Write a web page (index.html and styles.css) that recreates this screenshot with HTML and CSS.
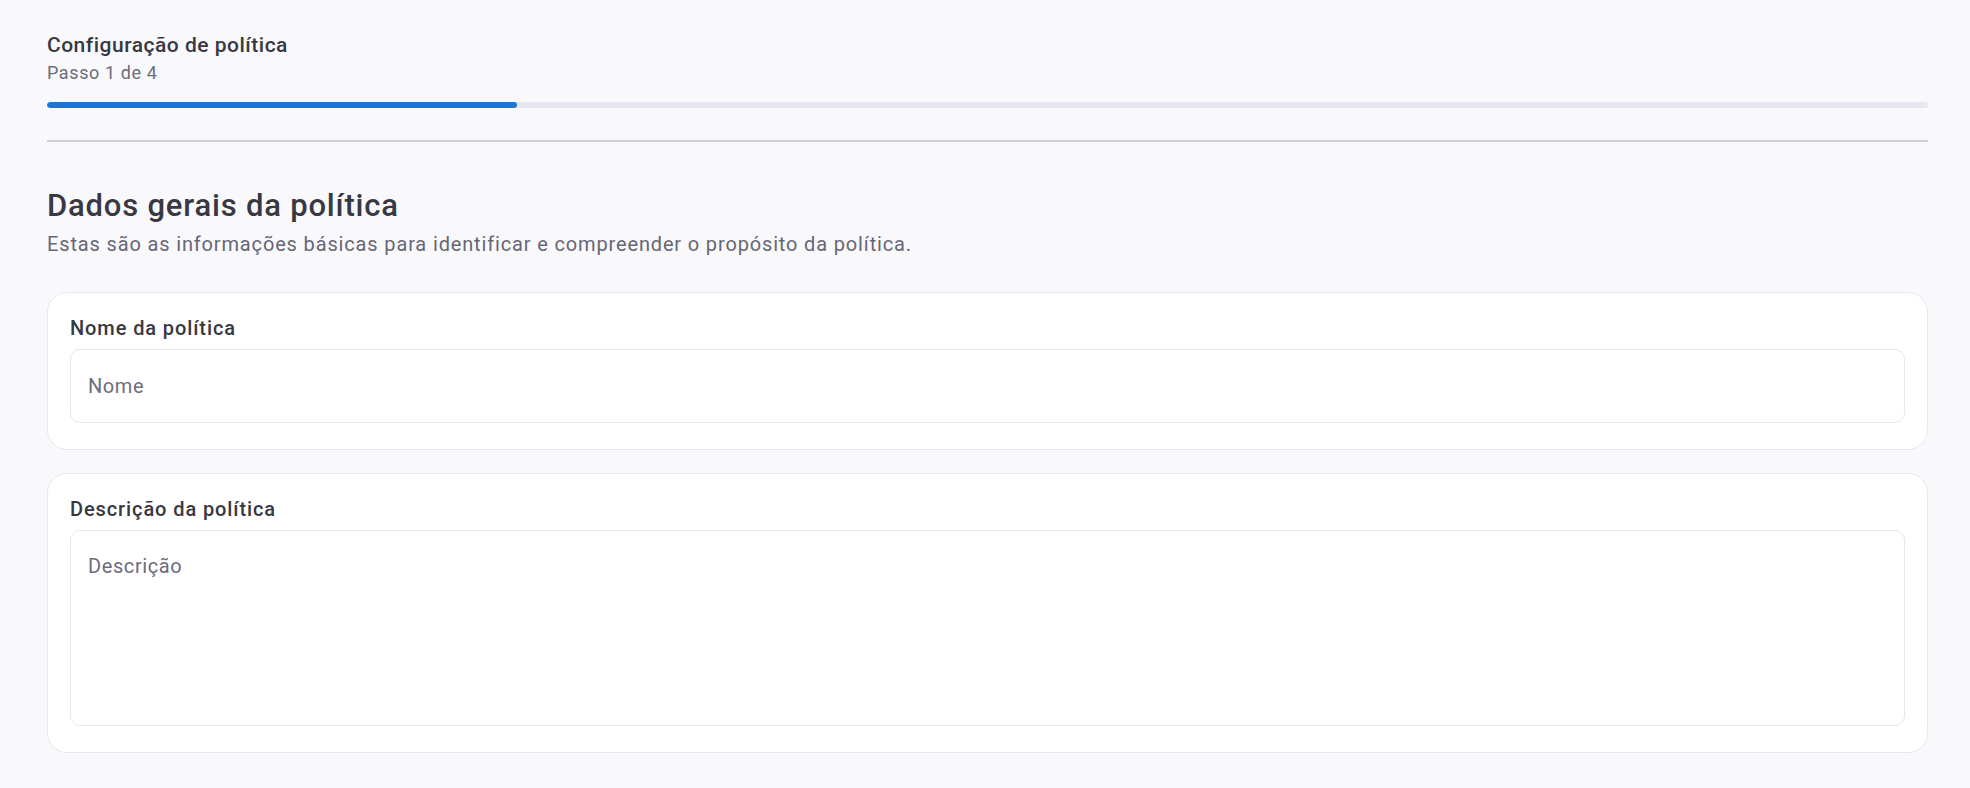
FILE: index.html
```html
<!DOCTYPE html>
<html lang="pt-BR">
<head>
    <meta charset="UTF-8">
    <meta name="viewport" content="width=device-width, initial-scale=1.0">
    <title>Configuração de política</title>
    <link rel="stylesheet" href="styles.css">
</head>
<body>
    <header class="stepper">
        <h1>Configuração de política</h1>
        <p class="step-count">Passo 1 de 4</p>
        <div class="progress">
            <div class="progress-fill" style="width: 25%"></div>
        </div>
    </header>

    <hr class="divider">

    <section class="section-head">
        <h2>Dados gerais da política</h2>
        <p>Estas são as informações básicas para identificar e compreender o propósito da política.</p>
    </section>

    <div class="field-card">
        <label for="policy-name">Nome da política</label>
        <input type="text" id="policy-name" placeholder="Nome">
    </div>

    <div class="field-card">
        <label for="policy-desc">Descrição da política</label>
        <textarea id="policy-desc" placeholder="Descrição"></textarea>
    </div>
</body>
</html>
```

FILE: styles.css
```css
* {
    margin: 0;
    padding: 0;
    box-sizing: border-box;
}

body {
    font-family: Roboto, "Liberation Sans", Arial, sans-serif;
    background-color: #f9f9fb;
    color: #383842;
    padding: 33px 42px 0 47px;
}

.stepper h1 {
    font-size: 21px;
    font-weight: 500;
    line-height: 25px;
    letter-spacing: 0.5px;
}

.step-count {
    margin-top: 3px;
    font-size: 18px;
    line-height: 24px;
    letter-spacing: 0.6px;
    color: #6c6c7e;
}

.progress {
    margin-top: 17px;
    height: 6px;
    border-radius: 3px;
    background-color: #e7e7f1;
    overflow: hidden;
}

.progress-fill {
    height: 100%;
    background-color: #1976d2;
    border-radius: 3px;
}

.divider {
    margin-top: 32px;
    border: none;
    height: 2px;
    background-color: #cfcfd7;
}

.section-head {
    margin-top: 46px;
}

.section-head h2 {
    font-size: 31px;
    font-weight: 500;
    line-height: 36px;
    letter-spacing: 0.8px;
}

.section-head p {
    margin-top: 7px;
    font-size: 20px;
    line-height: 26px;
    letter-spacing: 0.85px;
    color: #666676;
}

.field-card {
    margin-top: 35px;
    background-color: #fff;
    border: 1px solid #e7e7ef;
    border-radius: 20px;
    padding: 22px 22px 26px;
    display: flex;
    flex-direction: column;
}

.field-card + .field-card {
    margin-top: 23px;
}

.field-card label {
    font-size: 20px;
    font-weight: 500;
    line-height: 27px;
    letter-spacing: 0.9px;
    margin-bottom: 7px;
}

.field-card input,
.field-card textarea {
    font-family: inherit;
    font-size: 20px;
    letter-spacing: 0.6px;
    color: #383842;
    background-color: #fff;
    border: 1px solid #e7e7ef;
    border-radius: 10px;
    outline: none;
}

.field-card input {
    height: 74px;
    padding: 0 17px;
}

.field-card textarea {
    height: 196px;
    padding: 20px 17px;
    line-height: 1.5;
    resize: none;
}

.field-card input::placeholder,
.field-card textarea::placeholder {
    color: #6c6c7e;
}
```
